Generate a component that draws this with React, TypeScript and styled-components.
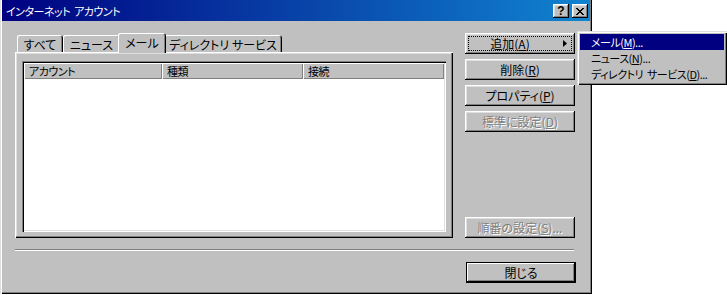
import React from 'react';
import styled, { createGlobalStyle, css } from 'styled-components';

const Global = createGlobalStyle`
  html, body { margin: 0; padding: 0; background: #ffffff; }
  body {
    font-family: "Noto Sans CJK JP", "Noto Sans", sans-serif;
    font-size: 12px;
    font-feature-settings: "palt";
    color: #000;
  }
`;

const narrowText = css`
  font-size: 11px;
  letter-spacing: -0.5px;
  word-spacing: 2px;
`;

const Stage = styled.div`
  position: relative;
  width: 727px;
  height: 295px;
  overflow: hidden;
`;

const Window = styled.div`
  width: 592px;
  height: 294px;
  box-sizing: border-box;
  background: #c0c0c0;
  padding: 0 2px 2px 2px;
  box-shadow: inset 1px 0 #dfdfdf, inset 2px 0 #ffffff, inset -1px -1px #000000,
    inset -2px -2px #808080;
  display: flex;
  flex-direction: column;
`;

const TitleBar = styled.div`
  height: 21px;
  flex: none;
  background: linear-gradient(to right, #000080, #1084d0);
  display: flex;
  align-items: center;
  padding: 1px 2px 0 4px;
  box-sizing: border-box;
  color: #ffffff;
`;

const TitleText = styled.div`
  flex: 1;
  ${narrowText}
  line-height: 20px;
  white-space: nowrap;
`;

const TitleButton = styled.div<{ $gap?: number }>`
  width: 16px;
  height: 14px;
  box-sizing: border-box;
  margin-left: ${(p) => p.$gap ?? 0}px;
  background: #c0c0c0;
  box-shadow: inset -1px -1px #000000, inset 1px 1px #ffffff, inset -2px -2px #808080,
    inset 2px 2px #dfdfdf;
  display: flex;
  align-items: center;
  justify-content: center;
  color: #000;
  font-family: "Liberation Sans", Arial, sans-serif;
  font-weight: bold;
  font-size: 12px;
  line-height: 12px;
`;

const Body = styled.div`
  flex: none;
  display: flex;
  gap: 12px;
  padding: 12px 0 0 13px;
`;

const LeftPane = styled.div`
  width: 438px;
  display: flex;
  flex-direction: column;
`;

const TabStrip = styled.div`
  height: 19px;
  display: flex;
  align-items: flex-end;
  padding-left: 2px;
  position: relative;
  z-index: 1;
`;

const Tab = styled.div<{ $w: number; $active?: boolean }>`
  width: ${(p) => p.$w}px;
  height: 17px;
  box-sizing: border-box;
  flex: none;
  background: #c0c0c0;
  border-radius: 2px 3px 0 0;
  box-shadow: inset 1px 1px #ffffff, inset -1px 0 #000000, inset -2px 0 #808080;
  display: flex;
  align-items: center;
  justify-content: center;
  white-space: nowrap;
  line-height: 15px;
  padding-top: 1px;
  ${(p) =>
    p.$active &&
    css`
      height: 20px;
      margin: 0 -2px -1px -2px;
      width: ${p.$w + 4}px;
      position: relative;
      z-index: 2;
      padding-bottom: 2px;
    `}
`;

const Panel = styled.div`
  height: 186px;
  box-sizing: border-box;
  background: #c0c0c0;
  box-shadow: inset 1px 1px #ffffff, inset -1px -1px #000000, inset -2px -2px #808080,
    inset 2px 2px #dfdfdf;
  padding: 9px 7px 6px 7px;
  display: flex;
`;

const ListBox = styled.div`
  flex: 1;
  background: #ffffff;
  padding: 2px;
  box-shadow: inset 1px 1px #808080, inset 2px 2px #000000, inset -1px -1px #ffffff,
    inset -2px -2px #dfdfdf;
  display: flex;
  flex-direction: column;
`;

const HeaderRow = styled.div`
  display: flex;
  height: 16px;
`;

const HeaderCell = styled.div<{ $w?: number }>`
  ${(p) => (p.$w ? `width: ${p.$w}px; flex: none;` : 'flex: 1;')}
  box-sizing: border-box;
  background: #c0c0c0;
  box-shadow: inset 1px 1px #ffffff, inset -1px -1px #808080;
  padding-left: 5px;
  ${narrowText}
  line-height: 16px;
  white-space: nowrap;
`;

const ButtonColumn = styled.div`
  width: 110px;
  display: flex;
  flex-direction: column;
  gap: 5px;
  height: 205px;
`;

const Spacer = styled.div`
  flex: 1;
`;

const Button = styled.div<{ $disabled?: boolean; $focused?: boolean; $default?: boolean }>`
  position: relative;
  width: 110px;
  height: 21px;
  flex: none;
  box-sizing: border-box;
  background: #c0c0c0;
  box-shadow: inset -1px -1px #000000, inset 1px 1px #ffffff, inset -2px -2px #808080,
    inset 2px 2px #dfdfdf;
  display: flex;
  align-items: center;
  justify-content: center;
  white-space: nowrap;
  line-height: 14px;
  ${(p) =>
    p.$default &&
    css`
      box-shadow: inset 0 0 0 1px #000000, inset -2px -2px #000000, inset 2px 2px #ffffff,
        inset -3px -3px #808080;
    `}
  ${(p) =>
    p.$disabled &&
    css`
      color: #808080;
      text-shadow: 1px 1px 0 #ffffff;
    `}
  ${(p) =>
    p.$focused &&
    css`
      padding-right: 20px;
      &::after {
        content: '';
        position: absolute;
        left: 3px;
        top: 3px;
        right: 3px;
        bottom: 3px;
        border: 1px dotted #000000;
      }
    `}
`;

const Arrow = styled.svg`
  position: absolute;
  right: 8px;
  top: 7px;
`;

const U = styled.span`
  text-decoration: underline;
  text-underline-offset: 1px;
`;

const Separator = styled.div`
  flex: none;
  margin: 11px 16px 0 13px;
  height: 2px;
  box-shadow: inset 0 1px #808080, inset 0 -1px #ffffff;
`;

const Footer = styled.div`
  flex: none;
  display: flex;
  justify-content: flex-end;
  padding: 11px 14px 0 0;
`;

const Menu = styled.div`
  position: absolute;
  left: 577px;
  top: 31px;
  width: 150px;
  box-sizing: border-box;
  padding: 3px;
  background: #c0c0c0;
  box-shadow: inset 1px 1px #dfdfdf, inset 2px 2px #ffffff, inset -1px -1px #000000,
    inset -2px -2px #808080;
  z-index: 5;
`;

const MenuItem = styled.div<{ $selected?: boolean }>`
  height: 16px;
  line-height: 16px;
  padding-left: 11px;
  ${narrowText}
  white-space: nowrap;
  ${(p) =>
    p.$selected &&
    css`
      background: #000080;
      color: #ffffff;
    `}
`;

export default function App() {
  return (
    <>
      <Global />
      <Stage>
        <Window>
          <TitleBar>
            <TitleText>インターネット アカウント</TitleText>
            <TitleButton>?</TitleButton>
            <TitleButton $gap={3}>
              <svg width="8" height="7" viewBox="0 0 8 7" shapeRendering="crispEdges">
                <path
                  d="M0 0h2v1h-2zM6 0h2v1h-2zM1 1h2v1h-2zM5 1h2v1h-2zM2 2h4v1h-4zM3 3h2v1h-2zM2 4h4v1h-4zM1 5h2v1h-2zM5 5h2v1h-2zM0 6h2v1h-2zM6 6h2v1h-2z"
                  fill="#000"
                />
              </svg>
            </TitleButton>
          </TitleBar>
          <Body>
            <LeftPane>
              <TabStrip>
                <Tab $w={46}>すべて</Tab>
                <Tab $w={57}>ニュース</Tab>
                <Tab $w={44} $active>
                  メール
                </Tab>
                <Tab $w={118}>ディレクトリ サービス</Tab>
              </TabStrip>
              <Panel>
                <ListBox>
                  <HeaderRow>
                    <HeaderCell $w={138}>アカウント</HeaderCell>
                    <HeaderCell $w={141}>種類</HeaderCell>
                    <HeaderCell>接続</HeaderCell>
                  </HeaderRow>
                </ListBox>
              </Panel>
            </LeftPane>
            <ButtonColumn>
              <Button $focused>
                追加(<U>A</U>)
                <Arrow width="4" height="7" viewBox="0 0 4 7">
                  <path d="M0 0L4 3.5L0 7Z" fill="#000" />
                </Arrow>
              </Button>
              <Button>
                削除(<U>R</U>)
              </Button>
              <Button>
                プロパティ(<U>P</U>)
              </Button>
              <Button $disabled>
                標準に設定(<U>D</U>)
              </Button>
              <Spacer />
              <Button $disabled>
                順番の設定(<U>S</U>)...
              </Button>
            </ButtonColumn>
          </Body>
          <Separator />
          <Footer>
            <Button $default>閉じる</Button>
          </Footer>
        </Window>
        <Menu>
          <MenuItem $selected>
            メール(<U>M</U>)...
          </MenuItem>
          <MenuItem>
            ニュース(<U>N</U>)...
          </MenuItem>
          <MenuItem>
            ディレクトリ サービス(<U>D</U>)...
          </MenuItem>
        </Menu>
      </Stage>
    </>
  );
}
